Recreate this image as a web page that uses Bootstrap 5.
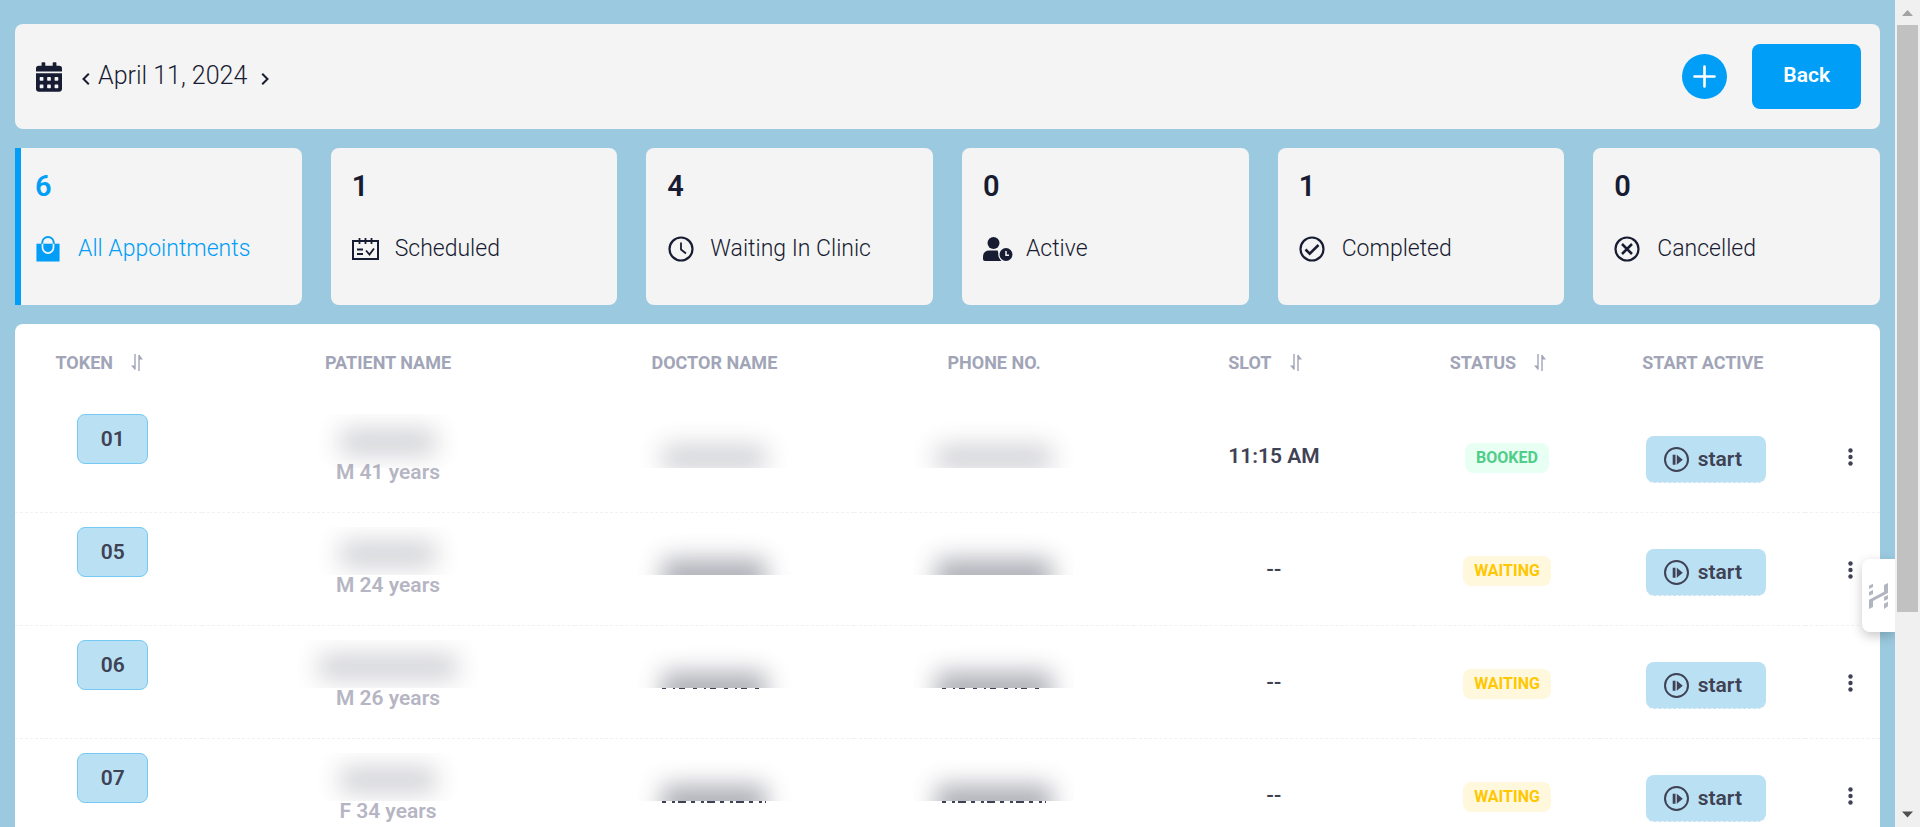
<!DOCTYPE html>
<html lang="en">
<head>
<meta charset="utf-8">
<meta name="viewport" content="width=device-width, initial-scale=1">
<title>Appointments</title>
<link href="https://cdn.jsdelivr.net/npm/bootstrap@5.3.0/dist/css/bootstrap.min.css" rel="stylesheet">
<style>
  :root { --ink: #181c32; --text: #3f4254; --muted: #a1a5b7; --accent: #009ef7; --soft: #bae0f3; }
  body { font-family: Roboto, "Liberation Sans", sans-serif; font-size: 21px; color: var(--ink); background: #9bcae0; }
  svg { display: block; flex: none; }
  .page-body { padding: 24px 15px 0; }
  .panel { background: #f4f4f4; border-radius: 8px; }
  .toolbar { padding: 20px 19px 20px 21px; margin-bottom: 19px; }
  .date-text { font-size: 25px; font-weight: 300; line-height: 28px; margin: 0 14px 2px 8px; }
  .bare { border: 0; background: none; padding: 0; color: inherit; }
  .add-btn { width: 45px; height: 45px; margin-right: 25px; background: var(--accent); }
  .back-btn { height: 65px; padding: 0 31px 2px; border: 0; border-radius: 8px; background: var(--accent); color: #fff; font-size: 21px; font-weight: 600; }
  .stats { display: grid; grid-template-columns: repeat(6, 1fr); gap: 29px; margin-bottom: 19px; }
  .stat { padding: 20px 21px 43px; color: var(--ink); text-decoration: none; }
  .stat.current { color: var(--accent); border-left: 6px solid var(--accent); border-radius: 0 8px 8px 0; padding-left: 14px; }
  .stat-count { font-size: 29px; font-weight: 600; line-height: 36px; margin-bottom: 32px; }
  .stat-label { font-size: 23px; font-weight: 300; line-height: 26px; }
  .stat-icon { width: 30px; margin-right: 13px; }
  .list-panel { background: #fff; border-radius: 8px 8px 0 0; }
  .appts { width: 100%; table-layout: fixed; text-align: center; color: var(--text); font-weight: 600; }
  .appts th { height: 76px; color: var(--muted); font-size: 18px; font-weight: 700; white-space: nowrap; text-align: center; }
  .appts td { height: 113px; padding: 0; vertical-align: middle; border-bottom: 1px dashed #eff2f5; line-height: 20px; }
  .appts tr:first-child td { height: 112px; }
  .appts td.from-top { vertical-align: top; padding-top: 14px; }
  .sorter { margin: 0 18px 0 18px; }
  .token { width: 71px; height: 50px; margin-left: 9px; border: 1px solid #74caf5; border-radius: 8px; background: var(--soft); }
  .age { color: #b5b5c3; }
  .status { display: inline-block; margin-top: 4px; padding: 5px 11px; border-radius: 8px; font-size: 16px; font-weight: 700; line-height: 20px; }
  .booked { color: #50cd89; background: #e8fff3; }
  .waiting { color: #ffc700; background: #fff8dd; }
  .start-btn { height: 47px; padding: 0 24px 0 18px; margin: 8px 0 0 6px; border: 0; border-bottom: 1px dashed #eff2f5; border-radius: 8px; background: var(--soft); color: var(--text); font-weight: 600; gap: 9px; }
  .more { margin: 6px 0 0 16px; }
  /* private fields are obscured */
  .veil { overflow: hidden; margin: 0 auto; height: 48px; width: 160px; }
  .veil::before { content: ""; display: block; width: 96px; height: 26px; margin: 14px auto 0; background: #3f4254; opacity: .23; filter: blur(12px); }
  .veil.wide { width: 183px; }
  .veil.wide::before { width: 138px; }
  .veil.over { position: relative; height: 54px; margin-bottom: -6px; }
  .veil.over::before { margin-top: 15px; }
  .veil.low::before { width: 104px; margin-top: 31px; height: 26px; }
  .veil.low.dense::before { opacity: .42; height: 36px; margin-top: 32px; }
  .veil.low.phone::before { width: 116px; }
  .edge { height: 1px; width: 104px; margin: 0 auto; background: repeating-linear-gradient(90deg, #3f4254 0 4px, transparent 4px 11px, #3f4254 11px 13px, transparent 13px 17px, #3f4254 17px 23px, transparent 23px 31px); }
  .edge.thick { height: 2px; background: repeating-linear-gradient(90deg, #3f4254 0 4px, transparent 4px 10px, #3f4254 10px 13px, transparent 13px 16px, #3f4254 16px 24px, transparent 24px 29px); }
  .side-tab { position: fixed; right: 25px; top: 559px; width: 33px; height: 73px; border-radius: 8px 0 0 8px; background: #fff; box-shadow: 0 4px 12px rgba(0,0,0,.22); clip-path: inset(-16px 0 -24px -16px); }
  .scroll-rail { width: 25px; background: #f0f0f0; }
  .scroll-thumb { height: 71%; margin: 0 2px; background: #c1c1c1; }
</style>
</head>
<body class="d-flex vh-100 overflow-hidden">

<svg width="0" height="0" class="position-absolute" aria-hidden="true">
  <symbol id="sort" viewBox="0 0 12 17"><path d="M4 0v15.500" fill="none" stroke="currentColor" stroke-width="1.400"/><path d="M0 11.500h4v4.500zM8 5.500V.5L12 5.500z" fill="currentColor"/><path d="M8 1v16" stroke="currentColor" stroke-width="1.400"/></symbol>
  <symbol id="play" viewBox="0 0 25 25"><circle cx="12.500" cy="12.500" r="11.500" fill="none" stroke="currentColor" stroke-width="2"/><path d="M8.700 7.700h2.800v10H8.700zM12.800 7.700l6 5-6 5z" fill="currentColor"/></symbol>
  <symbol id="dots" viewBox="0 0 5 18"><g fill="currentColor"><circle cx="2.500" cy="2.500" r="2.200"/><circle cx="2.500" cy="9" r="2.200"/><circle cx="2.500" cy="15.500" r="2.200"/></g></symbol>
</svg>

<main class="page-body flex-grow-1 overflow-hidden">
  <header class="panel toolbar d-flex align-items-center">
    <svg width="26" height="30" viewBox="0 0 448 512" fill="currentColor"><path fill-rule="evenodd" d="M0 464c0 26.500 21.500 48 48 48h352c26.500 0 48-21.500 48-48V192H0zM76 256h40q12 0 12 12v40q0 12-12 12H76q-12 0-12-12v-40q0-12 12-12zM204 256h40q12 0 12 12v40q0 12-12 12h-40q-12 0-12-12v-40q0-12 12-12zM332 256h40q12 0 12 12v40q0 12-12 12h-40q-12 0-12-12v-40q0-12 12-12zM76 384h40q12 0 12 12v40q0 12-12 12H76q-12 0-12-12v-40q0-12 12-12zM204 384h40q12 0 12 12v40q0 12-12 12h-40q-12 0-12-12v-40q0-12 12-12zM332 384h40q12 0 12 12v40q0 12-12 12h-40q-12 0-12-12v-40q0-12 12-12z"/><path d="M400 64h-48V16q0-16-16-16h-32q-16 0-16 16v48H160V16q0-16-16-16h-32Q96 0 96 16v48H48Q0 64 0 112v48h448v-48q0-48-48-48z"/></svg>
    <button class="bare ms-3" aria-label="Previous day"><svg class="ms-1 mt-1" width="8" height="12" viewBox="0 0 8 12"><path d="M6.800.7L1.500 6l5.300 5.300" fill="none" stroke="currentColor" stroke-width="2"/></svg></button>
    <span class="date-text">April 11, 2024</span>
    <button class="bare" aria-label="Next day"><svg class="mt-1" width="8" height="12" viewBox="0 0 8 12"><path d="M1.200.7L6.500 6l-5.300 5.300" fill="none" stroke="currentColor" stroke-width="2"/></svg></button>
    <button class="bare add-btn rounded-circle ms-auto d-flex align-items-center justify-content-center" aria-label="Add appointment"><svg width="23" height="23" viewBox="0 0 23 23"><path d="M11.500 1.500v20M1.500 11.500h20" stroke="#fff" stroke-width="2.600" stroke-linecap="round"/></svg></button>
    <button class="back-btn">Back</button>
  </header>

  <nav class="stats">
    <a href="#" class="panel stat current">
      <div class="stat-count">6</div>
      <div class="stat-label d-flex align-items-center"><span class="stat-icon"><svg width="26" height="26" viewBox="0 0 26 27"><path d="M1 8h24v18.500H1z" fill="currentColor"/><path d="M7 8.500V7a6 6 0 0 1 12 0v1.500" fill="none" stroke="currentColor" stroke-width="2"/><path d="M7.300 8v4a5.700 5.700 0 0 0 11.400 0V8" fill="none" stroke="#f4f4f4" stroke-width="1.800"/></svg></span>All Appointments</div>
    </a>
    <a href="#" class="panel stat">
      <div class="stat-count">1</div>
      <div class="stat-label d-flex align-items-center"><span class="stat-icon"><svg width="27" height="22" viewBox="0 0 27 22" fill="none" stroke="currentColor" stroke-width="1.800"><path d="M1 3h25v18H1z" stroke-width="2"/><path d="M7.500 0v6M13.500 0v6M19.500 0v6M5 11.500h6M5 16h6M14 12.500l3.500 4 4.500-6"/></svg></span>Scheduled</div>
    </a>
    <a href="#" class="panel stat">
      <div class="stat-count">4</div>
      <div class="stat-label d-flex align-items-center"><span class="stat-icon"><svg width="27" height="26" viewBox="0 0 27 26" fill="none" stroke="currentColor"><circle cx="14" cy="13" r="11.500" stroke-width="2.200"/><path d="M14 6.500v7l5 4" stroke-width="1.800"/></svg></span>Waiting In Clinic</div>
    </a>
    <a href="#" class="panel stat">
      <div class="stat-count">0</div>
      <div class="stat-label d-flex align-items-center"><span class="stat-icon"><svg width="30" height="24" viewBox="0 0 30 24"><g fill="currentColor"><circle cx="10.500" cy="6" r="6"/><path d="M6.500 13.500h8l5 10.500H2q-2 0-2-2v-2q0-6.500 6.500-6.500z"/></g><circle cx="23" cy="17.500" r="7.800" fill="#f4f4f4"/><circle cx="23" cy="17.500" r="6.500" fill="currentColor"/><path d="M23 14v4.200h3" fill="none" stroke="#f4f4f4" stroke-width="1.500"/></svg></span>Active</div>
    </a>
    <a href="#" class="panel stat">
      <div class="stat-count">1</div>
      <div class="stat-label d-flex align-items-center"><span class="stat-icon"><svg width="26" height="26" viewBox="0 0 26 26" fill="none" stroke="currentColor"><circle cx="13" cy="13" r="11.500" stroke-width="2.200"/><path d="M6.500 13.500l4.200 4.200L19.500 9" stroke-width="2.500"/></svg></span>Completed</div>
    </a>
    <a href="#" class="panel stat">
      <div class="stat-count">0</div>
      <div class="stat-label d-flex align-items-center"><span class="stat-icon"><svg width="26" height="26" viewBox="0 0 26 26" fill="none" stroke="currentColor"><circle cx="13" cy="13" r="11.500" stroke-width="2.200"/><path d="M8 8l10 10M18 8L8 18" stroke-width="2.500"/></svg></span>Cancelled</div>
    </a>
  </nav>

  <section class="list-panel">
    <table class="appts">
      <colgroup><col style="width:10%"><col style="width:20%"><col style="width:15%"><col style="width:15%"><col style="width:15%"><col style="width:10%"><col style="width:11%"><col style="width:4%"></colgroup>
      <thead>
        <tr>
          <th><span class="d-inline-flex align-items-center">TOKEN<svg class="sorter" width="12" height="17"><use href="#sort"/></svg></span></th>
          <th>PATIENT NAME</th><th>DOCTOR NAME</th><th>PHONE NO.</th>
          <th><span class="d-inline-flex align-items-center">SLOT<svg class="sorter" width="12" height="17"><use href="#sort"/></svg></span></th>
          <th><span class="d-inline-flex align-items-center">STATUS<svg class="sorter" width="12" height="17"><use href="#sort"/></svg></span></th>
          <th>START ACTIVE</th><th></th>
        </tr>
      </thead>
      <tbody>
        <tr>
          <td class="from-top"><span class="token d-inline-flex align-items-center justify-content-center">01</span></td>
          <td class="from-top"><div class="veil over"></div><div class="age">M 41 years</div></td>
          <td class="from-top"><div class="veil low over"></div></td>
          <td class="from-top"><div class="veil low phone over"></div></td>
          <td>11:15 AM</td>
          <td><span class="status booked">BOOKED</span></td>
          <td><button class="start-btn d-inline-flex align-items-center"><svg width="25" height="25"><use href="#play"/></svg>start</button></td>
          <td><button class="bare more" aria-label="More"><svg width="5" height="18"><use href="#dots"/></svg></button></td>
        </tr>
        <tr>
          <td class="from-top"><span class="token d-inline-flex align-items-center justify-content-center">05</span></td>
          <td class="from-top"><div class="veil"></div><div class="age">M 24 years</div></td>
          <td class="from-top"><div class="veil low dense"></div></td>
          <td class="from-top"><div class="veil low dense phone"></div></td>
          <td>--</td>
          <td><span class="status waiting">WAITING</span></td>
          <td><button class="start-btn d-inline-flex align-items-center"><svg width="25" height="25"><use href="#play"/></svg>start</button></td>
          <td><button class="bare more" aria-label="More"><svg width="5" height="18"><use href="#dots"/></svg></button></td>
        </tr>
        <tr>
          <td class="from-top"><span class="token d-inline-flex align-items-center justify-content-center">06</span></td>
          <td class="from-top"><div class="veil wide"></div><div class="age">M 26 years</div></td>
          <td class="from-top"><div class="veil low dense"></div><div class="edge"></div></td>
          <td class="from-top"><div class="veil low dense phone"></div><div class="edge"></div></td>
          <td>--</td>
          <td><span class="status waiting">WAITING</span></td>
          <td><button class="start-btn d-inline-flex align-items-center"><svg width="25" height="25"><use href="#play"/></svg>start</button></td>
          <td><button class="bare more" aria-label="More"><svg width="5" height="18"><use href="#dots"/></svg></button></td>
        </tr>
        <tr>
          <td class="from-top"><span class="token d-inline-flex align-items-center justify-content-center">07</span></td>
          <td class="from-top"><div class="veil"></div><div class="age">F 34 years</div></td>
          <td class="from-top"><div class="veil low dense"></div><div class="edge thick"></div></td>
          <td class="from-top"><div class="veil low dense phone"></div><div class="edge thick"></div></td>
          <td>--</td>
          <td><span class="status waiting">WAITING</span></td>
          <td><button class="start-btn d-inline-flex align-items-center"><svg width="25" height="25"><use href="#play"/></svg>start</button></td>
          <td><button class="bare more" aria-label="More"><svg width="5" height="18"><use href="#dots"/></svg></button></td>
        </tr>
      </tbody>
    </table>
  </section>
</main>

<button class="bare side-tab d-flex align-items-center justify-content-center" aria-label="Open help">
  <svg width="19" height="26" viewBox="0 0 57 78" fill="#b0b5c0"><path d="M0 78V50l45-24V6L57 0v30L12 54v18zM0 8l12-6v10L0 18zM0 27l12-6v12L0 38zM45 42l12-6v12l-12 6zM45 62l12-6v14l-12 8z"/></svg>
</button>

<aside class="scroll-rail d-flex flex-column flex-shrink-0" aria-hidden="true">
  <svg width="25" height="25"><path d="M7 16l5.500-6 5.500 6z" fill="#a3a3a3"/></svg>
  <div class="scroll-thumb"></div>
  <svg class="mt-auto" width="25" height="25"><path d="M7 9.500l5.500 6 5.500-6z" fill="#505050"/></svg>
</aside>

<script src="https://cdn.jsdelivr.net/npm/bootstrap@5.3.0/dist/js/bootstrap.bundle.min.js"></script>
</body>
</html>
